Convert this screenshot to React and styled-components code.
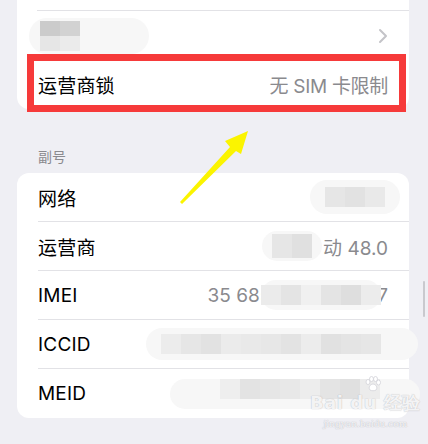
import React from "react";
import styled, { createGlobalStyle } from "styled-components";

const GlobalStyle = createGlobalStyle`
  html, body {
    margin: 0;
    padding: 0;
    background: #efeff4;
  }
  body {
    font-family: "Inter", "Noto Sans CJK SC", sans-serif;
    -webkit-font-smoothing: antialiased;
  }
`;

const Screen = styled.div`
  position: relative;
  width: 428px;
  height: 444px;
  overflow: hidden;
  background: #efeff4;
`;

const Card = styled.div`
  width: 392px;
  margin-left: 17px;
  background: #fff;
  border-radius: ${(p) => (p.$cut ? "0 0 12px 12px" : "12px")};
`;

const Stub = styled.div`
  height: 11px;
  margin-left: 20px;
  border-bottom: 1px solid #e2e2e6;
  box-sizing: border-box;
`;

const Row = styled.div`
  position: relative;
  height: 49px;
  padding-left: 21px;
  box-sizing: border-box;
`;

const RowInner = styled.div`
  display: flex;
  align-items: center;
  justify-content: space-between;
  height: 100%;
  padding-right: 21px;
  box-sizing: border-box;
  border-bottom: ${(p) => (p.$last ? "none" : "1px solid #e2e2e6")};
`;

const Label = styled.span`
  font-family: "Inter", "Noto Sans CJK SC", sans-serif;
  font-size: 19px;
  color: #000;
  letter-spacing: 0.2px;
`;

const Value = styled.span`
  display: flex;
  align-items: center;
  font-family: "Inter", "Noto Sans CJK SC", sans-serif;
  font-size: 19px;
  color: #8a8a8e;
  white-space: nowrap;
  letter-spacing: ${(p) => p.$ls || "0"};
`;

const SectionHead = styled.div`
  padding: 37px 0 7px 38px;
  font-family: "Noto Sans CJK SC", sans-serif;
  font-size: 14px;
  line-height: 20px;
  color: #8a8a8e;
`;

const Pill = styled.span`
  display: inline-flex;
  align-items: ${(p) => p.$align || "center"};
  justify-content: ${(p) => p.$justify || "center"};
  width: ${(p) => p.$w}px;
  height: ${(p) => p.$h}px;
  margin: ${(p) => p.$m || "0"};
  border-radius: ${(p) => p.$h / 2}px;
  background: #f7f7f7;
  flex-shrink: 0;
  position: relative;
  z-index: 1;
`;

const Cells = styled.span`
  display: grid;
  grid-template-columns: repeat(${(p) => p.$cols}, ${(p) => p.$cw}px);
  grid-auto-rows: ${(p) => p.$ch}px;
  filter: blur(0.4px);
`;

const Cell = styled.span`
  background: ${(p) => p.$c};
`;

const Mosaic = ({ cols, cw, ch, tones }) => (
  <Cells $cols={cols} $cw={cw} $ch={ch}>
    {tones.map((c, i) => (
      <Cell key={i} $c={c} />
    ))}
  </Cells>
);

const Chevron = () => (
  <svg width="10" height="16" viewBox="0 0 10 16">
    <polyline
      points="2,2 8,8 2,14"
      fill="none"
      stroke="#c4c4c8"
      strokeWidth="2"
      strokeLinecap="round"
      strokeLinejoin="round"
    />
  </svg>
);

const Paw = () => (
  <svg width="18" height="16" viewBox="0 0 18 16" style={{ marginLeft: 16 }}>
    <g fill="#fff" stroke="#d2d2d8" strokeWidth="0.8">
      <ellipse cx="4" cy="6" rx="2" ry="2.5" />
      <ellipse cx="7.5" cy="3" rx="2" ry="2.5" />
      <ellipse cx="11.5" cy="3" rx="2" ry="2.5" />
      <ellipse cx="14.5" cy="6.5" rx="2" ry="2.5" />
      <path d="M9 8 C12 8 14 12 12 14 C10.5 15 7.5 15 6 14 C4 12 6 8 9 8 Z" />
    </g>
  </svg>
);

const Highlight = styled.div`
  position: absolute;
  left: 10px;
  top: -6px;
  width: 379px;
  height: 58px;
  border: 7px solid #f63a3a;
  box-sizing: border-box;
  z-index: 2;
`;

const Arrow = styled.svg`
  position: absolute;
  left: 0;
  top: 0;
  z-index: 3;
`;

const Watermark = styled.div`
  position: absolute;
  left: 310px;
  top: 376px;
  z-index: 3;
  display: flex;
  flex-direction: column;
  align-items: center;
  color: rgba(255, 255, 255, 0.85);
  text-shadow: 0 0 1px rgba(150, 150, 160, 0.45), 0 0 1px rgba(150, 150, 160, 0.45);
`;

const MarkTop = styled.div`
  font-family: "DejaVu Sans", sans-serif;
  font-weight: bold;
  font-size: 18px;
  line-height: 22px;
  letter-spacing: 0.5px;
`;

const MarkSub = styled.div`
  font-family: "DejaVu Serif", serif;
  font-size: 9px;
  line-height: 12px;
  margin-top: 4px;
`;

const Scroll = styled.div`
  position: absolute;
  right: 3px;
  top: 281px;
  width: 2px;
  height: 36px;
  border-radius: 1px;
  background: #c9c9ce;
`;

const App = () => {
  return (
    <Screen>
      <GlobalStyle />
      <Card $cut>
        <Stub />
        <Row>
          <RowInner $last>
            <Pill $w={120} $h={36} $m="0 0 0 -9px" $justify="flex-start">
              <span style={{ marginLeft: 11 }}>
                <Mosaic
                  cols={2}
                  cw={20}
                  ch={15}
                  tones={["#cbcbcb", "#d2d2d2", "#e6e6e6", "#ebebeb"]}
                />
              </span>
            </Pill>
            <Chevron />
          </RowInner>
        </Row>
        <Row>
          <RowInner $last>
            <Label>运营商锁</Label>
            <Value $ls="-0.3px">无 SIM 卡限制</Value>
          </RowInner>
          <Highlight />
        </Row>
      </Card>

      <SectionHead>副号</SectionHead>

      <Card>
        <Row>
          <RowInner>
            <Label>网络</Label>
            <Pill $w={90} $h={34} $m="0 -12px 0 0">
              <Mosaic
                cols={3}
                cw={20}
                ch={20}
                tones={["#e6e6e6", "#e2e2e2", "#e9e9e9"]}
              />
            </Pill>
          </RowInner>
        </Row>
        <Row>
          <RowInner>
            <Label>运营商</Label>
            <Value>
              <Pill $w={60} $h={30} $m="0 1px 0 0">
                <Mosaic
                  cols={2}
                  cw={20}
                  ch={24}
                  tones={["#e6e6e6", "#e0e0e0"]}
                />
              </Pill>
              动 48.0
            </Value>
          </RowInner>
        </Row>
        <Row>
          <RowInner>
            <Label>IMEI</Label>
            <Value>
              35 685
              <Pill $w={120} $h={30} $m="0 -4px 0 -10px">
                <Mosaic
                  cols={6}
                  cw={20}
                  ch={20}
                  tones={[
                    "#ebebeb",
                    "#e4e4e4",
                    "#f0f0f0",
                    "#e4e4e4",
                    "#dedede",
                    "#ececec",
                  ]}
                />
              </Pill>
              7
            </Value>
          </RowInner>
        </Row>
        <Row>
          <RowInner>
            <Label>ICCID</Label>
            <Pill $w={272} $h={32} $m="0 -30px 0 0" $justify="flex-start">
              <span style={{ marginLeft: 15 }}>
                <Mosaic
                  cols={11}
                  cw={20}
                  ch={20}
                  tones={[
                    "#ececec",
                    "#e6e6e6",
                    "#e2e2e2",
                    "#ebebeb",
                    "#e9e9e9",
                    "#e7e7e7",
                    "#e3e3e3",
                    "#ececec",
                    "#e1e1e1",
                    "#e4e4e4",
                    "#e6e6e6",
                  ]}
                />
              </span>
            </Pill>
          </RowInner>
        </Row>
        <Row>
          <RowInner $last>
            <Label>MEID</Label>
            <Pill
              $w={250}
              $h={30}
              $m="0 -32px 0 0"
              $justify="flex-start"
              $align="flex-start"
            >
              <span style={{ marginLeft: 50 }}>
                <Mosaic
                  cols={8}
                  cw={20}
                  ch={20}
                  tones={[
                    "#eeeeee",
                    "#e3e3e3",
                    "#e6e6e6",
                    "#e8e8e8",
                    "#ededed",
                    "#e4e4e4",
                    "#e0e0e0",
                    "#ececec",
                  ]}
                />
              </span>
            </Pill>
          </RowInner>
        </Row>
      </Card>

      <Arrow width="428" height="444" viewBox="0 0 428 444">
        <polygon
          points="180,202 230,147 225,141 248,131 241,154 236,151 182,204"
          fill="#fbf400"
        />
      </Arrow>

      <Watermark>
        <Paw />
        <MarkTop>Bai du 经验</MarkTop>
        <MarkSub>jingyan.baidu.com</MarkSub>
      </Watermark>

      <Scroll />
    </Screen>
  );
};

export default App;
